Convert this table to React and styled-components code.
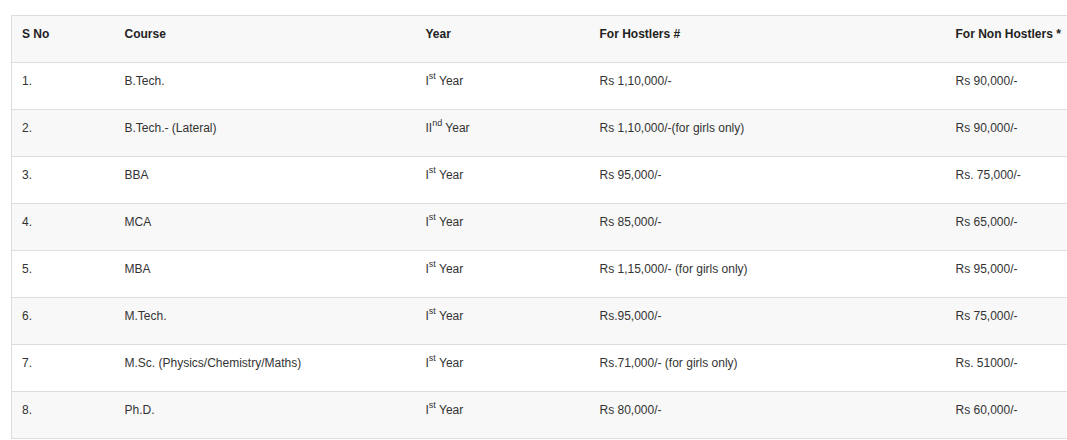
import React from 'react'
import styled, { createGlobalStyle } from 'styled-components'

const GlobalStyle = createGlobalStyle`
    html, body
    {
        margin: 0;
        padding: 0;
        background: #ffffff;
        overflow: hidden;
    }
`

const Page = styled.div`
    padding: 15px 0 0 11px;
    font-family: Arial, "Liberation Sans", sans-serif;
    font-size: 12px;
    line-height: 17px;
    color: #333333;
`

const FeeTable = styled.table`
    width: 1090px;
    border-collapse: collapse;
    border-spacing: 0;
    border: 1px solid #dddddd;
    table-layout: fixed;
`

const Row = styled.tr`
    background-color: ${({ $striped }) => $striped ? '#f8f8f8' : '#ffffff'};
`

const HeadCell = styled.th`
    text-align: left;
    font-weight: bold;
    color: #222222;
    padding: 10px 10px 19px;
    border-top: 1px solid #dddddd;
    vertical-align: top;
`

const Cell = styled.td`
    padding: 10px 10px 19px;
    border-top: 1px solid #dddddd;
    vertical-align: top;
`

const Sup = styled.sup`
    font-size: 9px;
    line-height: 0;
    position: relative;
    top: -1px;
    vertical-align: super;
`

const columns = [
    { label: 'S No', width: 103 },
    { label: 'Course', width: 301 },
    { label: 'Year', width: 174 },
    { label: 'For Hostlers #', width: 356 },
    { label: 'For Non Hostlers *', width: 156 },
]

const fees = [
    { no: '1.', course: 'B.Tech.', year: ['I', 'st'], hostel: 'Rs 1,10,000/-', day: 'Rs 90,000/-' },
    { no: '2.', course: 'B.Tech.- (Lateral)', year: ['II', 'nd'], hostel: 'Rs 1,10,000/-(for girls only)', day: 'Rs 90,000/-' },
    { no: '3.', course: 'BBA', year: ['I', 'st'], hostel: 'Rs 95,000/-', day: 'Rs. 75,000/-' },
    { no: '4.', course: 'MCA', year: ['I', 'st'], hostel: 'Rs 85,000/-', day: 'Rs 65,000/-' },
    { no: '5.', course: 'MBA', year: ['I', 'st'], hostel: 'Rs 1,15,000/- (for girls only)', day: 'Rs 95,000/-' },
    { no: '6.', course: 'M.Tech.', year: ['I', 'st'], hostel: 'Rs.95,000/-', day: 'Rs 75,000/-' },
    { no: '7.', course: 'M.Sc. (Physics/Chemistry/Maths)', year: ['I', 'st'], hostel: 'Rs.71,000/- (for girls only)', day: 'Rs. 51000/-' },
    { no: '8.', course: 'Ph.D.', year: ['I', 'st'], hostel: 'Rs 80,000/-', day: 'Rs 60,000/-' },
]

export default function App()
{
    return (
        <Page>
            <GlobalStyle />
            <FeeTable>
                <colgroup>
                    {columns.map((col) => <col key={col.label} style={{ width: col.width }} />)}
                </colgroup>
                <thead>
                    <Row $striped>
                        {columns.map((col) => <HeadCell key={col.label}>{col.label}</HeadCell>)}
                    </Row>
                </thead>
                <tbody>
                    {fees.map((fee, i) =>
                        <Row key={fee.no} $striped={i % 2 === 1}>
                            <Cell>{fee.no}</Cell>
                            <Cell>{fee.course}</Cell>
                            <Cell>{fee.year[0]}<Sup>{fee.year[1]}</Sup> Year</Cell>
                            <Cell>{fee.hostel}</Cell>
                            <Cell>{fee.day}</Cell>
                        </Row>
                    )}
                </tbody>
            </FeeTable>
        </Page>
    )
}
